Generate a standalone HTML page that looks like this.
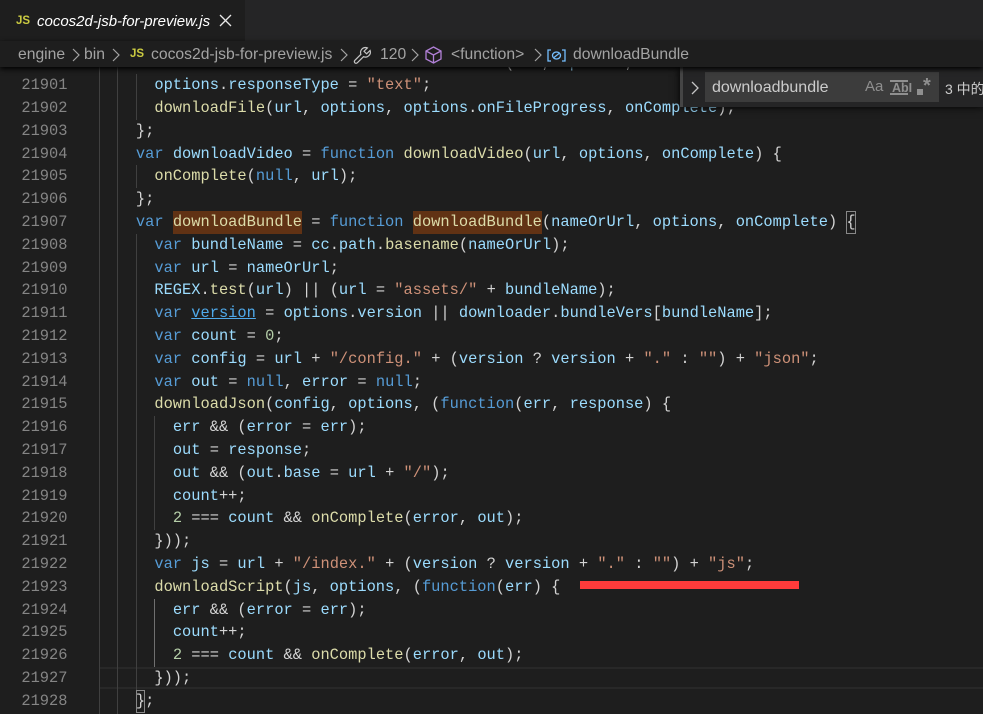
<!DOCTYPE html>
<html><head><meta charset="utf-8">
<style>
html,body{margin:0;padding:0;width:983px;height:714px;overflow:hidden;background:#1e1e1e}
*{box-sizing:border-box}
.a{position:absolute;white-space:pre}
#tabs{position:absolute;left:0;top:0;width:983px;height:41px;background:#252526}
#tab{position:absolute;left:0;top:0;width:245px;height:41px;background:#1e1e1e}
#crumb{position:absolute;left:0;top:41px;width:983px;height:26px;background:#1e1e1e;box-shadow:0 2px 5px #000;z-index:3}
.ui{font-family:"Liberation Sans","Noto Sans CJK SC",sans-serif;font-size:15px;color:#a3a3a3;line-height:20px}
#crumb .ui{font-size:15.7px}
.js{font-family:"Liberation Sans",sans-serif;font-weight:bold;font-size:11.5px;color:#cbcb41;line-height:14px}
#code{position:absolute;left:0;top:67px;width:983px;height:647px;overflow:hidden}
.g{position:absolute;width:1px;background:#404040}
#nums,#src{position:absolute;top:-15.5px;font-family:"Liberation Mono",monospace;font-size:15.38px;line-height:22.8px;color:#d4d4d4}
#nums{left:0;width:67.5px;text-align:right;color:#858585}
#src{left:99px;width:884px}
#src div,#nums div{height:22.8px;white-space:pre}
.k{color:#569cd6}.v{color:#9cdcfe}.f{color:#dcdcaa}.s{color:#ce9178}.n{color:#b5cea8}
.u{color:#4fa9ea;text-decoration:underline}
.h{background:#613214;display:inline-block;color:#dcdcaa}
.b{display:inline-block;box-shadow:inset 0 0 0 1px #888}
#find{position:absolute;left:680px;top:67px;width:303px;height:40px;background:#252526;border-left:3px solid #454545;box-shadow:0 0 8px #000;z-index:2}
#input{position:absolute;left:705px;top:72px;width:234px;height:30px;background:#3c3c3c;z-index:2}
</style></head><body>
<div id="code">
<div style="position:absolute;left:99px;top:600px;width:884px;height:22px;border-top:2px solid #282828;border-bottom:2px solid #282828"></div>
<div class="g" style="left:99px;top:0;height:647px"></div>
<div class="g" style="left:117px;top:0;height:647px"></div>
<div class="g" style="left:136px;top:7px;height:46px"></div>
<div class="g" style="left:136px;top:98px;height:23px"></div>
<div class="g" style="left:136px;top:167px;height:456px"></div>
<div class="g" style="left:154px;top:349px;height:114px"></div>
<div class="g" style="left:154px;top:532px;height:68px;background:#707070"></div>
<div id="nums"><div>21900</div><div>21901</div><div>21902</div><div>21903</div><div>21904</div><div>21905</div><div>21906</div><div>21907</div><div>21908</div><div>21909</div><div>21910</div><div>21911</div><div>21912</div><div>21913</div><div>21914</div><div>21915</div><div>21916</div><div>21917</div><div>21918</div><div>21919</div><div>21920</div><div>21921</div><div>21922</div><div>21923</div><div>21924</div><div>21925</div><div>21926</div><div>21927</div><div>21928</div></div>
<div id="src">
<div>    <span class="k">var</span> <span class="v">downloadText</span> = <span class="k">function</span> <span class="f">downloadText</span>(<span class="v">url</span>, <span class="v">options</span>, <span class="v">onComplete</span>) {</div>
<div>      <span class="v">options</span>.<span class="v">responseType</span> = <span class="s">"text"</span>;</div>
<div>      <span class="f">downloadFile</span>(<span class="v">url</span>, <span class="v">options</span>, <span class="v">options</span>.<span class="v">onFileProgress</span>, <span class="v">onComplete</span>);</div>
<div>    };</div>
<div>    <span class="k">var</span> <span class="v">downloadVideo</span> = <span class="k">function</span> <span class="f">downloadVideo</span>(<span class="v">url</span>, <span class="v">options</span>, <span class="v">onComplete</span>) {</div>
<div>      <span class="f">onComplete</span>(<span class="k">null</span>, <span class="v">url</span>);</div>
<div>    };</div>
<div>    <span class="k">var</span> <span class="h">downloadBundle</span> = <span class="k">function</span> <span class="h">downloadBundle</span>(<span class="v">nameOrUrl</span>, <span class="v">options</span>, <span class="v">onComplete</span>) <span class="b">{</span></div>
<div>      <span class="k">var</span> <span class="v">bundleName</span> = <span class="v">cc</span>.<span class="v">path</span>.<span class="f">basename</span>(<span class="v">nameOrUrl</span>);</div>
<div>      <span class="k">var</span> <span class="v">url</span> = <span class="v">nameOrUrl</span>;</div>
<div>      <span class="v">REGEX</span>.<span class="f">test</span>(<span class="v">url</span>) || (<span class="v">url</span> = <span class="s">"assets/"</span> + <span class="v">bundleName</span>);</div>
<div>      <span class="k">var</span> <span class="u">version</span> = <span class="v">options</span>.<span class="v">version</span> || <span class="v">downloader</span>.<span class="v">bundleVers</span>[<span class="v">bundleName</span>];</div>
<div>      <span class="k">var</span> <span class="v">count</span> = <span class="n">0</span>;</div>
<div>      <span class="k">var</span> <span class="v">config</span> = <span class="v">url</span> + <span class="s">"/config."</span> + (<span class="v">version</span> ? <span class="v">version</span> + <span class="s">"."</span> : <span class="s">""</span>) + <span class="s">"json"</span>;</div>
<div>      <span class="k">var</span> <span class="v">out</span> = <span class="k">null</span>, <span class="v">error</span> = <span class="k">null</span>;</div>
<div>      <span class="f">downloadJson</span>(<span class="v">config</span>, <span class="v">options</span>, (<span class="k">function</span>(<span class="v">err</span>, <span class="v">response</span>) {</div>
<div>        <span class="v">err</span> &amp;&amp; (<span class="v">error</span> = <span class="v">err</span>);</div>
<div>        <span class="v">out</span> = <span class="v">response</span>;</div>
<div>        <span class="v">out</span> &amp;&amp; (<span class="v">out</span>.<span class="v">base</span> = <span class="v">url</span> + <span class="s">"/"</span>);</div>
<div>        <span class="v">count</span>++;</div>
<div>        <span class="n">2</span> === <span class="v">count</span> &amp;&amp; <span class="f">onComplete</span>(<span class="v">error</span>, <span class="v">out</span>);</div>
<div>      }));</div>
<div>      <span class="k">var</span> <span class="v">js</span> = <span class="v">url</span> + <span class="s">"/index."</span> + (<span class="v">version</span> ? <span class="v">version</span> + <span class="s">"."</span> : <span class="s">""</span>) + <span class="s">"js"</span>;</div>
<div>      <span class="f">downloadScript</span>(<span class="v">js</span>, <span class="v">options</span>, (<span class="k">function</span>(<span class="v">err</span>) {</div>
<div>        <span class="v">err</span> &amp;&amp; (<span class="v">error</span> = <span class="v">err</span>);</div>
<div>        <span class="v">count</span>++;</div>
<div>        <span class="n">2</span> === <span class="v">count</span> &amp;&amp; <span class="f">onComplete</span>(<span class="v">error</span>, <span class="v">out</span>);</div>
<div>      }));</div>
<div>    <span class="b">}</span>;</div>
</div>
</div>

<div id="tabs"><div id="tab"></div></div>
<div class="a js" style="left:16px;top:14px">JS</div>
<div class="a ui" style="left:37px;top:12px;color:#fff;font-style:italic">cocos2d-jsb-for-preview.js</div>
<svg class="a" style="left:219px;top:14px" width="13" height="13" viewBox="0 0 13 13"><path d="M1 1L12 12M12 1L1 12" stroke="#e8e8e8" stroke-width="1.3" fill="none"/></svg>

<div id="crumb">
<div class="a ui" style="left:18px;top:4px">engine</div>
<svg class="a" style="left:71px;top:7px" width="10" height="14" viewBox="0 0 10 14"><path d="M2 1L8 7L2 13" stroke="#a3a3a3" stroke-width="1.2" fill="none"/></svg>
<div class="a ui" style="left:84px;top:4px">bin</div>
<svg class="a" style="left:111px;top:7px" width="10" height="14" viewBox="0 0 10 14"><path d="M2 1L8 7L2 13" stroke="#a3a3a3" stroke-width="1.2" fill="none"/></svg>
<div class="a js" style="left:130px;top:6px">JS</div>
<div class="a ui" style="left:151px;top:4px">cocos2d-jsb-for-preview.js</div>
<svg class="a" style="left:339px;top:7px" width="10" height="14" viewBox="0 0 10 14"><path d="M2 1L8 7L2 13" stroke="#a3a3a3" stroke-width="1.2" fill="none"/></svg>
<svg class="a" style="left:353px;top:5px" width="19" height="19" viewBox="0 0 19 19"><path d="M12.5 1.5a5 5 0 0 0-4.6 6.8L1.8 14.4a2 2 0 0 0 0 2.4a2 2 0 0 0 2.5 0l6.2-6.1a5 5 0 0 0 6.6-6.3L13.6 7.8L11 5.2L14.4 1.9a5 5 0 0 0-1.9-.4z" stroke="#c5c5c5" stroke-width="1.2" fill="none"/></svg>
<div class="a ui" style="left:380px;top:4px">120</div>
<svg class="a" style="left:410px;top:7px" width="10" height="14" viewBox="0 0 10 14"><path d="M2 1L8 7L2 13" stroke="#a3a3a3" stroke-width="1.2" fill="none"/></svg>
<svg class="a" style="left:425px;top:5px" width="17" height="18" viewBox="0 0 17 18"><path d="M8.5 1L16 5v8l-7.500 4L1 13V5zM1 5l7.500 4L16 5M8.500 9v8" stroke="#b180d7" stroke-width="1.300" fill="none"/></svg>
<div class="a ui" style="left:451px;top:4px">&lt;function&gt;</div>
<svg class="a" style="left:533px;top:7px" width="10" height="14" viewBox="0 0 10 14"><path d="M2 1L8 7L2 13" stroke="#a3a3a3" stroke-width="1.2" fill="none"/></svg>
<svg class="a" style="left:547px;top:8px" width="19" height="13" viewBox="0 0 19 13"><path d="M4 1H1V12H4M15 1H18V12H15" stroke="#75beff" stroke-width="1.300" fill="none"/><ellipse cx="9.500" cy="6.500" rx="4" ry="3.500" stroke="#75beff" stroke-width="1.300" fill="none"/><path d="M7 8.500L12 4.500" stroke="#75beff" stroke-width="1.200"/></svg>
<div class="a ui" style="left:573px;top:4px">downloadBundle</div>
</div>

<div id="find"></div>
<svg class="a" style="left:690px;top:81px;z-index:3" width="10" height="14" viewBox="0 0 10 14"><path d="M2 1L8 7L2 13" stroke="#c5c5c5" stroke-width="1.300" fill="none"/></svg>
<div id="input"></div>
<div class="a ui" style="left:712px;top:78px;color:#ccc;font-size:16px;z-index:3">downloadbundle</div>
<div class="a ui" style="left:865px;top:77px;color:#8f8f8f;font-size:15px;z-index:3">Aa</div>
<div class="a ui" style="left:892px;top:78px;color:#8f8f8f;font-size:12.500px;font-weight:bold;z-index:3">AbI</div>
<div class="a" style="left:890px;top:80px;width:18px;height:15px;border-top:2px solid #8f8f8f;border-bottom:2px solid #8f8f8f;z-index:3"></div>
<div class="a" style="left:917px;top:89px;width:6px;height:6px;background:#8f8f8f;z-index:3"></div>
<div class="a ui" style="left:923px;top:76px;color:#8f8f8f;font-size:20px;font-weight:bold;z-index:3">*</div>
<div class="a ui" style="left:945px;top:79px;color:#ccc;font-size:14px;z-index:3">3 中的</div>

<div class="a" style="left:580px;top:581px;width:219px;height:8px;background:#ff3b3b;z-index:4"></div>
</body></html>
